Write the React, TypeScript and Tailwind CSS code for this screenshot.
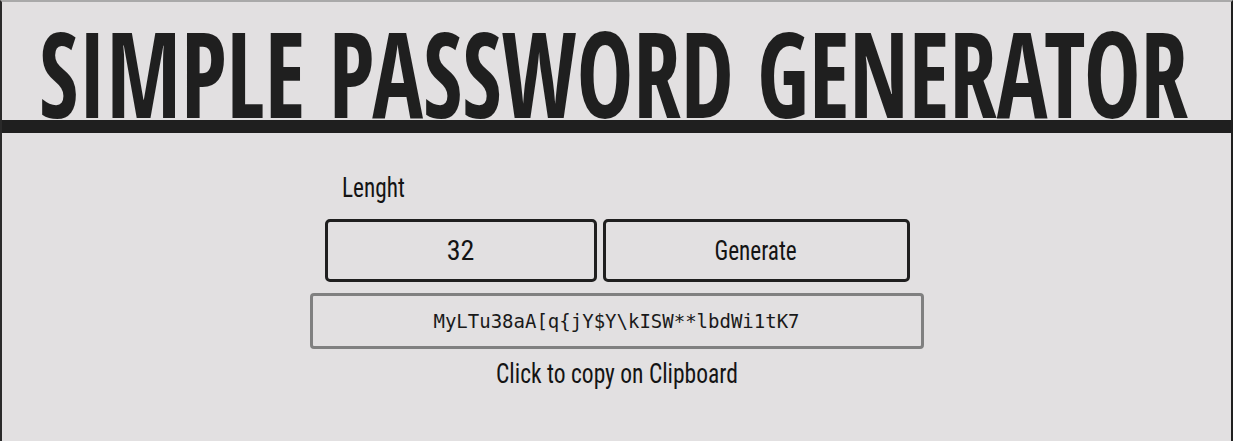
export default function App() {
  return (
    <div className="min-h-[441px] bg-[#e2e0e1] border-l-2 border-r-2 border-t-2 border-l-[#2a2a2a] border-r-[#1f1f1f] border-t-[#a9a9a9]">
      <header className="border-b-[13px] border-[#1f1f1f] pt-[22px]">
        <h1 className="flex justify-center pr-[6px] font-['Open_Sans_Condensed','Roboto_Condensed',sans-serif] font-bold text-[95px] leading-[96px] text-[#1f1f1f] whitespace-nowrap">
          <span className="inline-block scale-y-[1.242]">SIMPLE PASSWORD GENERATOR</span>
        </h1>
      </header>
      <main className="flex flex-col items-center font-['Roboto_Condensed',sans-serif] font-normal text-[28px] leading-[32px] text-[#141414]">
        <div className="w-[614px] mt-[39px]">
          <div className="pl-[32px]">
            <span className="inline-block origin-left scale-x-[0.83]">Lenght</span>
          </div>
          <div className="flex gap-[6px] pl-[15px] mt-[15px]">
            <input
              readOnly
              value="32"
              className="w-[272px] h-[63px] border-[3px] border-[#1f1f1f] rounded-[5px] bg-transparent text-center outline-none"
            />
            <button className="w-[307px] h-[63px] border-[3px] border-[#1f1f1f] rounded-[5px] bg-transparent flex items-center justify-center">
              <span className="inline-block scale-x-[0.83]">Generate</span>
            </button>
          </div>
          <div className="mt-[11px] h-[56px] border-[3px] border-[#808080] rounded-[4px] flex items-center justify-center font-['DejaVu_Sans_Mono',monospace] text-[19px] leading-none text-[#1a1a1a]">
            MyLTu38aA[q{"{"}jY$Y\kISW**lbdWi1tK7
          </div>
          <div className="mt-[9px] text-center">
            <span className="inline-block scale-x-[0.84]">Click to copy on Clipboard</span>
          </div>
        </div>
      </main>
    </div>
  );
}
